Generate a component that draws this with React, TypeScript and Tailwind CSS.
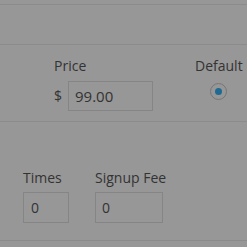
import React from "react";

export default function App() {
  return (
    <div
      className="w-[247px] h-[247px] overflow-hidden bg-[#979797] text-[#333333] text-[14px] leading-[20px]"
      style={{ fontFamily: '"Open Sans", "Noto Sans", sans-serif' }}
    >
      <div className="h-[5px] border-b border-[#8b8b8b]" />
      <div className="h-[40px] border-b border-[#8b8b8b]" />
      <div className="h-[77px] border-b border-[#8b8b8b] flex pt-[11px]">
        <div className="ml-[54px] flex flex-col">
          <span>Price</span>
          <div className="flex items-center mt-[5px]">
            <span className="w-[14px]">$</span>
            <div className="w-[85px] h-[30px] border border-[#858585] flex items-center pl-[6px] text-[15px]">
              99.00
            </div>
          </div>
        </div>
        <div className="ml-[42px] flex flex-col items-center">
          <span>Default</span>
          <div className="mt-[7px] w-[17px] h-[17px] rounded-full border border-[#767676] flex items-center justify-center">
            <div className="w-[7px] h-[7px] rounded-full bg-[#1d6a92]" />
          </div>
        </div>
      </div>
      <div className="h-[119px] border-b border-[#8b8b8b] flex gap-[26px] pt-[46px] pl-[23px]">
        <div className="flex flex-col">
          <span>Times</span>
          <div className="mt-[4px] w-[46px] h-[31px] border border-[#858585] flex items-center pl-[7px]">
            0
          </div>
        </div>
        <div className="flex flex-col">
          <span>Signup Fee</span>
          <div className="mt-[4px] w-[68px] h-[31px] border border-[#858585] flex items-center pl-[6px]">
            0
          </div>
        </div>
      </div>
    </div>
  );
}
